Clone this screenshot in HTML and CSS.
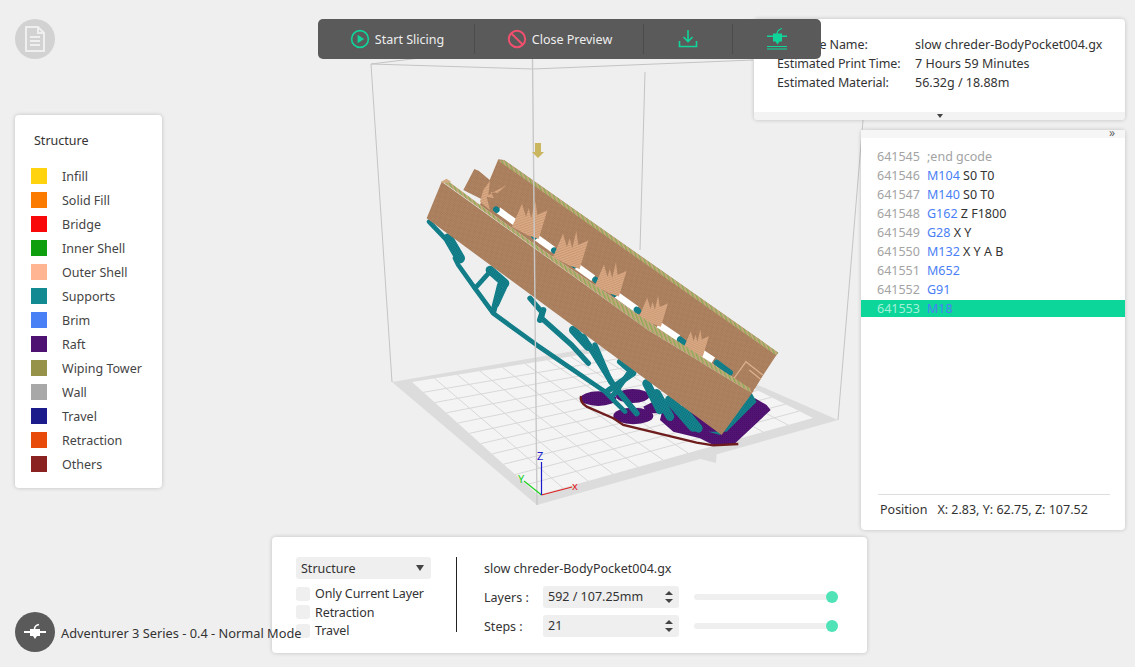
FILE: index.html
```html
<!DOCTYPE html>
<html lang="en">
<head>
    <meta charset="UTF-8">
    <meta name="viewport" content="width=device-width, initial-scale=1.0">
    <title>Preview</title>
    <link rel="stylesheet" href="styles.css">
</head>
<body>
    <div class="viewport">
        <!-- build volume and sliced model -->
        <svg class="scene" width="1135" height="667" viewBox="0 0 1135 667">
            <defs>
                <pattern id="weave" width="4" height="4" patternUnits="userSpaceOnUse" patternTransform="rotate(35)">
                    <rect width="4" height="4" fill="#ae8361"/>
                    <rect width="2" height="2" fill="#a27654"/>
                </pattern>
                <pattern id="edge" width="10" height="10" patternUnits="userSpaceOnUse" patternTransform="rotate(-20)">
                    <rect width="10" height="10" fill="#c6a67e"/>
                    <rect width="4" height="10" fill="#8bab52"/>
                </pattern>
                <pattern id="teal" width="6" height="6" patternUnits="userSpaceOnUse" patternTransform="rotate(30)">
                    <rect width="6" height="6" fill="#15848e"/>
                    <rect width="3" height="3" fill="#0b6a76"/>
                </pattern>
                <pattern id="purple" width="6" height="6" patternUnits="userSpaceOnUse">
                    <rect width="6" height="6" fill="#521375"/>
                    <rect width="3" height="3" fill="#470f66"/>
                </pattern>
                <pattern id="streak" width="7" height="7" patternUnits="userSpaceOnUse" patternTransform="rotate(70)">
                    <rect width="7" height="7" fill="#dcaa85"/>
                    <rect width="3" height="7" fill="#c89874"/>
                </pattern>
                <path id="fin" d="M-6,6 L24,-64 L36,-24 L44,-50 L52,-20 L64,-72 L70,-30 L100,-44 L74,42 L40,30 Z"/>
            </defs>
            <polygon class="plate-side" points="392,382 650,338 838,420 537,505"/>
            <polygon class="plate-top" points="412,382 661,342 813,418 538,495"/>
            <polygon class="plate-side" points="693,457 717,449 716,463"/>
            <g class="plate-grid">
                <path d="M423.5,392.3 L674.8,348.9 M434.9,402.5 L688.6,355.8 M446.4,412.8 L702.5,362.7 M457.8,423.1 L716.3,369.6 M469.3,433.4 L730.1,376.5 M480.7,443.6 L743.9,383.5 M492.2,453.9 L757.7,390.4 M503.6,464.2 L771.5,397.3 M515.1,474.5 L785.4,404.2 M526.5,484.7 L799.2,411.1"/>
                <path d="M434.6,378.4 L563,488 M457.3,374.7 L588,481 M479.9,371.1 L613,474 M502.5,367.5 L638,467 M525.2,363.8 L663,460 M547.8,360.2 L688,453 M570.5,356.5 L713,446 M593.1,352.9 L738,439 M615.7,349.3 L763,432 M638.4,345.6 L788,425"/>
            </g>
            <g class="volume">
                <path d="M371,64 L392,382 M371,64 L420,58 M371,64 L533,69 L753,60 M645,72 L640,250 M838,420 L868,60"/>
            </g>
            <g transform="translate(380 130) scale(.3333)">
                <g class="raft">
                    <ellipse cx="655" cy="806" rx="54" ry="22"/>
                    <ellipse cx="758" cy="798" rx="50" ry="21"/>
                    <ellipse cx="760" cy="858" rx="60" ry="25"/>
                    <path d="M790,830 L825,812 L900,830 L1020,880 L1125,805 L1160,825 L1172,840 L1060,945 L1000,945 L960,925 L880,905 L840,870 L845,850 L800,850 Z"/>
                </g>
                <path class="outline" d="M603,798 Q598,815 620,830 L700,865 L730,885 L950,938 L1000,946 L1075,942"/>
                <g class="support">
                    <path class="w14" d="M147,275 L195,325"/>
                    <path class="w30" d="M205,325 L240,385"/>
                    <path class="w14" d="M225,385 L235,405 L285,475 L340,550 L470,645 L675,785 L735,845"/>
                    <path class="w14" d="M285,475 L330,425"/>
                    <path class="w26" d="M330,420 L375,460"/>
                    <path class="w18" d="M360,465 L340,545"/>
                    <path class="w14" d="M380,460 L350,525"/>
                    <path class="w16" d="M450,505 L485,545 L485,565 L575,645 L625,700"/>
                    <path class="w18" d="M490,540 L480,570"/>
                    <path class="w26" d="M580,600 L625,650"/>
                    <path class="w18" d="M610,620 L660,700 L700,765 L770,850"/>
                    <path class="w16" d="M645,645 L692,755"/>
                    <path class="w18" d="M720,695 L760,730 L680,785"/>
                    <path class="w16" d="M750,725 L700,795"/>
                    <path class="w26" d="M800,760 L840,840"/>
                    <path class="w26" d="M830,790 L870,860"/>
                    <path class="w30" d="M870,810 L940,890"/>
                    <path class="w26" d="M910,840 L955,895"/>
                    <polygon fill="url(#teal)" points="1110,780 1130,815 1040,905 985,905 1020,915"/>
                </g>
                <!-- back wall -->
                <polygon fill="url(#weave)" points="283,117 296,122 332,152 320,215 250,180"/>
                <polygon fill="url(#weave)" points="355,88 372,90 1195,668 1185,682 1150,735 1125,775 1110,775 860,612 500,368 345,258 300,225 325,160"/>
                <path class="slot" d="M355,241 L405,277 M470,323 L520,359 M590,409 L640,445 M710,495 L770,538 M835,584 L895,624 M960,665 L1000,691"/>
                <g class="support">
                    <path class="w18" d="M348,238 L350,240 M462,318 L464,320 M522,361 L524,363 M582,404 L584,406 M646,449 L648,451 M702,490 L704,492"/>
                    <path class="w18" d="M770,539 L775,543 M900,628 L915,640 M1010,698 L1050,728"/>
                </g>
                <g class="fins">
                    <polygon points="380,165 352,190 332,185 342,205 320,200 330,240 300,215 310,180 330,152 325,195"/>
                    <use href="#fin" transform="translate(402 285)"/>
                    <use href="#fin" transform="translate(525 375)"/>
                    <use href="#fin" transform="translate(650 462) scale(.9)"/>
                    <use href="#fin" transform="translate(782 556) scale(.82)"/>
                    <use href="#fin" transform="translate(915 650) scale(.72)"/>
                </g>
                <!-- right end of the part -->
                <polygon fill="url(#weave)" points="1098,695 1148,735 1115,792 1062,745"/>
                <path class="fin-line" d="M1062,745 L1098,695 L1148,735 M1108,720 L1142,748"/>
                <polygon fill="url(#edge)" points="355,92 372,90 1195,668 1188,676"/>
                <!-- front wall -->
                <polygon fill="url(#edge)" points="200,150 345,258 500,368 860,612 1110,775 1116,790 804,600 188,155"/>
                <polygon fill="url(#weave)" points="185,155 804,600 1116,790 1025,915 140,265"/>
                <polygon class="corner" points="183,155 200,146 214,156 192,160"/>
            </g>
            <path class="center-line" d="M532.5,59 L537,505"/>
            <path class="pin" d="M535,143 H541 V152 H544 L538,158 L532,152 H535 Z"/>
            <g class="axes">
                <path class="axis-x" d="M541.5,495 L572,487"/>
                <path class="axis-y" d="M541.5,495 L524,481"/>
                <path class="axis-z" d="M541.5,495 V462"/>
                <text class="label-x" x="572" y="490">x</text>
                <text class="label-y" x="518" y="483">Y</text>
                <text class="label-z" x="537" y="460">Z</text>
            </g>
        </svg>

        <div class="round-btn doc-btn">
            <svg width="20" height="26" viewBox="0 0 20 26">
                <path class="doc" d="M1,1 H13 L19,7 V25 H1 Z M13,1 V7 H19 M5,11 H15 M5,15 H15 M5,19 H15"/>
            </svg>
        </div>

        <div class="panel legend">
            <div class="legend-title">Structure</div>
            <div class="legend-row"><span class="swatch infill"></span>Infill</div>
            <div class="legend-row"><span class="swatch solid"></span>Solid Fill</div>
            <div class="legend-row"><span class="swatch bridge"></span>Bridge</div>
            <div class="legend-row"><span class="swatch inner"></span>Inner Shell</div>
            <div class="legend-row"><span class="swatch outer"></span>Outer Shell</div>
            <div class="legend-row"><span class="swatch supports"></span>Supports</div>
            <div class="legend-row"><span class="swatch brim"></span>Brim</div>
            <div class="legend-row"><span class="swatch raft-c"></span>Raft</div>
            <div class="legend-row"><span class="swatch wiping"></span>Wiping Tower</div>
            <div class="legend-row"><span class="swatch wall"></span>Wall</div>
            <div class="legend-row"><span class="swatch travel"></span>Travel</div>
            <div class="legend-row"><span class="swatch retraction"></span>Retraction</div>
            <div class="legend-row"><span class="swatch others"></span>Others</div>
        </div>

        <div class="panel info">
            <div class="info-body">
                <div class="info-row"><span class="info-key">Machine Name:</span><span>slow chreder-BodyPocket004.gx</span></div>
                <div class="info-row"><span class="info-key">Estimated Print Time:</span><span>7 Hours 59 Minutes</span></div>
                <div class="info-row"><span class="info-key">Estimated Material:</span><span>56.32g / 18.88m</span></div>
            </div>
            <div class="info-foot"><span class="down-arrow"></span></div>
        </div>

        <div class="toolbar">
            <div class="tool tool-start">
                <svg width="20" height="20" viewBox="0 0 20 20">
                    <circle class="green-line" cx="10" cy="10" r="8.4"/>
                    <path class="green-fill" d="M7.6,5.8 L14.2,10 L7.6,14.2 Z"/>
                </svg>
                Start Slicing
            </div>
            <div class="tool tool-close">
                <svg width="20" height="20" viewBox="0 0 20 20">
                    <circle class="red-line" cx="10" cy="10" r="8.2"/>
                    <path class="red-line" d="M4.2,4.2 L15.8,15.8"/>
                </svg>
                Close Preview
            </div>
            <div class="tool tool-save">
                <svg width="20" height="20" viewBox="0 0 20 20">
                    <path class="green-line" d="M10,1 V12 M5.5,8 L10,12.5 L14.5,8 M1.5,12 V17.5 H18.5 V12"/>
                </svg>
            </div>
            <div class="tool tool-print">
                <svg width="24" height="24" viewBox="0 0 24 24">
                    <path class="green-fill" d="M2,8.5 H8 V6.5 H17 V8.5 H22 V10 H17 V14.5 H14.5 L12.5,17.5 L10.5,14.5 H8 V10 H2 Z"/>
                    <path class="green-line thin" d="M12,7 Q12,3 17,1.5 M2,19.5 H22 M2,22 H22"/>
                </svg>
            </div>
        </div>

        <div class="panel gcode">
            <div class="gcode-top">»</div>
            <div class="gcode-list">
                <div class="gcode-row"><span class="line-no">641545</span><span class="comment">;end gcode</span></div>
                <div class="gcode-row"><span class="line-no">641546</span><span><b>M104</b> S0 T0</span></div>
                <div class="gcode-row"><span class="line-no">641547</span><span><b>M140</b> S0 T0</span></div>
                <div class="gcode-row"><span class="line-no">641548</span><span><b>G162</b> Z F1800</span></div>
                <div class="gcode-row"><span class="line-no">641549</span><span><b>G28</b> X Y</span></div>
                <div class="gcode-row"><span class="line-no">641550</span><span><b>M132</b> X Y A B</span></div>
                <div class="gcode-row"><span class="line-no">641551</span><span><b>M652</b></span></div>
                <div class="gcode-row"><span class="line-no">641552</span><span><b>G91</b></span></div>
                <div class="gcode-row current"><span class="line-no">641553</span><span><b>M18</b></span></div>
            </div>
            <div class="position">
                <span>Position</span>
                <span>X: 2.83, Y: 62.75, Z: 107.52</span>
            </div>
        </div>

        <div class="panel controls">
            <div class="controls-left">
                <div class="select-box">Structure<span class="select-arrow"></span></div>
                <label class="check"><span class="check-box"></span>Only Current Layer</label>
                <label class="check"><span class="check-box"></span>Retraction</label>
                <label class="check"><span class="check-box"></span>Travel</label>
            </div>
            <div class="controls-right">
                <div class="file-name">slow chreder-BodyPocket004.gx</div>
                <div class="step-row">
                    <span class="step-label">Layers :</span>
                    <div class="spin">592 / 107.25mm<span class="spin-arrows"></span></div>
                    <div class="slider"><span class="thumb"></span></div>
                </div>
                <div class="step-row">
                    <span class="step-label">Steps :</span>
                    <div class="spin">21<span class="spin-arrows"></span></div>
                    <div class="slider"><span class="thumb"></span></div>
                </div>
            </div>
        </div>

        <div class="machine">
            <div class="round-btn machine-btn">
                <svg width="26" height="26" viewBox="0 0 26 26">
                    <path class="white-fill" d="M2,12 H8 V10 H18 V12 H24 V14 H18 V17 H15 L13,20 L11,17 H8 V14 H2 Z"/>
                    <path class="white-line" d="M12.5,10 Q12.5,6.5 17,5.5"/>
                </svg>
            </div>
            <span class="machine-text">Adventurer 3 Series - 0.4 - Normal Mode</span>
        </div>
    </div>
</body>
</html>
```

FILE: styles.css
```css
* {
    box-sizing: border-box;
}
body {
    margin: 0;
    background-color: #efefef;
    font-family: "Noto Sans", "Noto Sans CJK SC", sans-serif;
    font-size: 12.5px;
    color: #333;
}
.viewport {
    position: relative;
    width: 1135px;
    height: 667px;
    overflow: hidden;
}
.scene {
    position: absolute;
    left: 0;
    top: 0;
}

/* 3d scene */
.plate-side {
    fill: #dcdcdc;
}
.plate-top {
    fill: #f4f4f4;
}
.plate-grid path {
    fill: none;
    stroke: #d8d8d8;
    stroke-width: 1;
}
.volume path {
    fill: none;
    stroke: #c4c4c4;
    stroke-width: 1;
}
.center-line {
    fill: none;
    stroke: #c8c8c8;
    stroke-width: 1.4;
}
.raft {
    fill: url(#purple);
}
.outline {
    fill: none;
    stroke: #6e1c1c;
    stroke-width: 7;
}
.support path {
    fill: none;
    stroke: url(#teal);
    stroke-linejoin: round;
    stroke-linecap: round;
}
.support .w14 {
    stroke-width: 14;
}
.support .w16 {
    stroke-width: 16;
}
.support .w18 {
    stroke-width: 18;
}
.support .w26 {
    stroke-width: 26;
}
.support .w30 {
    stroke-width: 30;
}
.slot {
    fill: none;
    stroke: #fff;
    stroke-width: 20;
}
.fins {
    fill: url(#streak);
}
.fin-line {
    fill: none;
    stroke: #dcb08c;
    stroke-width: 4;
}
.corner {
    fill: #d3ac84;
}
.pin {
    fill: #c9b65e;
}
.axes path {
    fill: none;
    stroke-width: 1.2;
}
.axes text {
    font-size: 11px;
}
.axis-x {
    stroke: #e02020;
}
.axis-y {
    stroke: #20d020;
}
.axis-z {
    stroke: #1a1acc;
}
.label-x {
    fill: #e02020;
}
.label-y {
    fill: #20d020;
}
.label-z {
    fill: #1a1acc;
}

/* floating panels */
.panel {
    position: absolute;
    background-color: #fff;
    border-radius: 4px;
    box-shadow: 0 0 4px rgba(0, 0, 0, 0.2);
}
.round-btn {
    display: flex;
    align-items: center;
    justify-content: center;
    width: 40px;
    height: 40px;
    border-radius: 50%;
    flex-shrink: 0;
}
.doc-btn {
    position: absolute;
    left: 15px;
    top: 19px;
    background-color: #d2d2d2;
}
.doc {
    fill: none;
    stroke: #efefef;
    stroke-width: 2;
}

.legend {
    left: 15px;
    top: 115px;
    width: 147px;
    height: 373px;
    padding: 17px 16px 0;
}
.legend-title {
    padding-left: 3px;
    height: 24px;
    line-height: 18px;
    margin-bottom: 8px;
}
.legend-row {
    display: flex;
    align-items: center;
    height: 24px;
    color: #444;
}
.swatch {
    width: 16px;
    height: 16px;
    margin-right: 15px;
}
.infill { background-color: #ffd40f; }
.solid { background-color: #fb7a00; }
.bridge { background-color: #f80808; }
.inner { background-color: #0e9e0e; }
.outer { background-color: #ffb592; }
.supports { background-color: #138a92; }
.brim { background-color: #4a80f5; }
.raft-c { background-color: #4e1272; }
.wiping { background-color: #96924a; }
.wall { background-color: #a8a8a8; }
.travel { background-color: #1b1b8c; }
.retraction { background-color: #e84a0a; }
.others { background-color: #8a2222; }

.info {
    left: 754px;
    top: 19px;
    width: 371px;
    height: 101px;
    overflow: hidden;
}
.info-body {
    height: 93px;
    padding: 16px 0 0 23px;
}
.info-row {
    display: flex;
    height: 19px;
    line-height: 19px;
}
.info-key {
    width: 138px;
    letter-spacing: -0.1px;
}
.info-foot {
    display: flex;
    justify-content: center;
    padding-top: 2px;
    height: 8px;
    background-color: #f3f3f3;
}
.down-arrow {
    width: 0;
    height: 0;
    border-left: 3px solid transparent;
    border-right: 3px solid transparent;
    border-top: 4px solid #444;
}

.toolbar {
    position: absolute;
    left: 318px;
    top: 19px;
    width: 503px;
    height: 40px;
    display: flex;
    align-items: center;
    background-color: #5a5a5a;
    border-radius: 5px;
    color: #eee;
}
.tool {
    display: flex;
    align-items: center;
    justify-content: center;
    height: 30px;
    border-right: 1px solid #4b4b4b;
}
.tool svg {
    margin-right: 5px;
}
.tool-start {
    width: 157px;
    padding-left: 2px;
}
.tool-close {
    width: 169px;
    padding-left: 1px;
}
.tool-save {
    width: 89px;
}
.tool-print {
    width: 88px;
    border-right: none;
}
.tool-save svg,
.tool-print svg {
    margin-right: 0;
}
.green-line {
    fill: none;
    stroke: #0fd59a;
    stroke-width: 1.6;
}
.green-line.thin {
    stroke-width: 1.2;
}
.green-fill {
    fill: #0fd59a;
}
.red-line {
    fill: none;
    stroke: #f0506e;
    stroke-width: 2;
}

.gcode {
    left: 861px;
    top: 130px;
    width: 264px;
    height: 400px;
}
.gcode-top {
    height: 8px;
    line-height: 6px;
    padding-right: 10px;
    text-align: right;
    font-size: 12px;
    color: #666;
    background-color: #f6f6f6;
}
.gcode-list {
    padding-top: 9px;
    height: 356px;
}
.gcode-row {
    display: flex;
    height: 19px;
    line-height: 19px;
    padding-left: 16px;
}
.line-no {
    width: 50px;
    color: #a3a3a3;
}
.comment {
    color: #a3a3a3;
}
.gcode-row b {
    font-weight: normal;
    color: #4a80f5;
}
.gcode-row.current {
    background-color: #0dd69b;
    height: 17px;
    line-height: 17px;
    margin-top: 1px;
}
.gcode-row.current .line-no {
    color: #a5f0d8;
}
.position {
    display: flex;
    gap: 10px;
    margin: 0 15px 0 17px;
    padding: 6px 2px 0;
    border-top: 1px solid #ddd;
    line-height: 18px;
}

.controls {
    left: 272px;
    top: 537px;
    width: 595px;
    height: 116px;
    padding: 20px 29px 0 24px;
    display: flex;
}
.controls-left {
    width: 161px;
    height: 75px;
    border-right: 1px solid #222;
    padding-right: 25px;
}
.select-box {
    display: flex;
    align-items: center;
    justify-content: space-between;
    height: 22px;
    padding: 0 7px 0 5px;
    margin-bottom: 5.5px;
    background-color: #efefef;
    border-radius: 3px;
}
.select-arrow {
    width: 0;
    height: 0;
    border-left: 4px solid transparent;
    border-right: 4px solid transparent;
    border-top: 6.5px solid #444;
}
.check {
    display: flex;
    align-items: center;
    height: 18.5px;
    letter-spacing: -0.1px;
}
.check-box {
    width: 14px;
    height: 14px;
    margin-right: 5px;
    background-color: #efefef;
    border-radius: 3px;
}
.controls-right {
    flex: 1;
    padding-left: 27px;
}
.file-name {
    height: 22px;
    line-height: 23px;
    margin-bottom: 7px;
}
.step-row {
    display: flex;
    align-items: center;
    height: 22px;
    margin-bottom: 7px;
}
.step-label {
    width: 59px;
}
.spin {
    position: relative;
    width: 136px;
    height: 22px;
    line-height: 22px;
    padding-left: 5px;
    background-color: #efefef;
    border-radius: 3px;
}
.spin-arrows {
    position: absolute;
    right: 5px;
    top: 5px;
    width: 9px;
    height: 12px;
}
.spin-arrows::before,
.spin-arrows::after {
    content: "";
    position: absolute;
    left: 0;
    border-left: 4.5px solid transparent;
    border-right: 4.5px solid transparent;
}
.spin-arrows::before {
    top: 0;
    border-bottom: 4.5px solid #444;
}
.spin-arrows::after {
    bottom: 0;
    border-top: 4.5px solid #444;
}
.slider {
    position: relative;
    width: 144px;
    height: 6px;
    margin-left: 15px;
    background-color: #efefef;
    border-radius: 3px;
}
.thumb {
    position: absolute;
    right: 0;
    top: -3px;
    width: 12px;
    height: 12px;
    border-radius: 50%;
    background-color: #50e3b7;
}

.machine {
    position: absolute;
    left: 15px;
    top: 612px;
    display: flex;
    align-items: center;
}
.machine-btn {
    background-color: #5a5a5a;
    margin-right: 6px;
}
.machine-text {
    position: relative;
    top: 1px;
    font-size: 12.8px;
}
.white-fill {
    fill: #fff;
}
.white-line {
    fill: none;
    stroke: #fff;
    stroke-width: 1.6;
}
```
